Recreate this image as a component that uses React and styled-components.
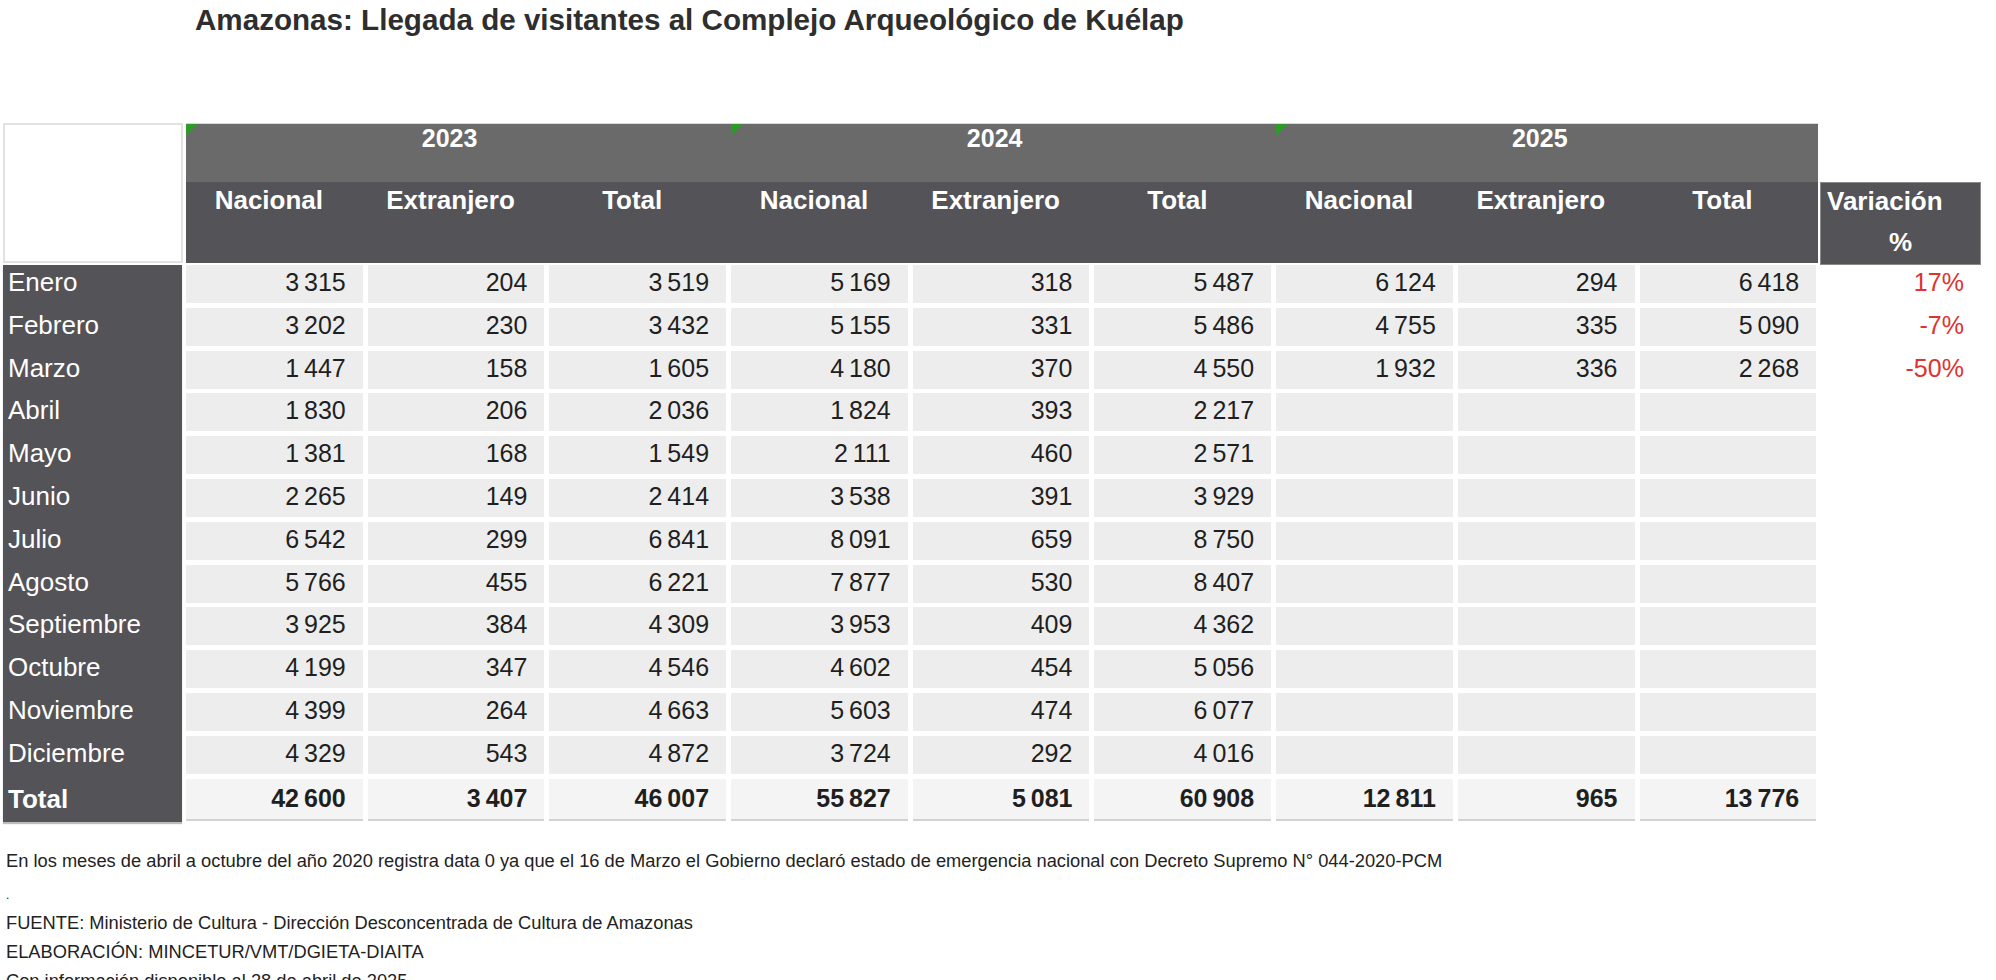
import React from "react"
import styled, { createGlobalStyle } from "styled-components"

const GlobalStyle = createGlobalStyle`
  html, body {
    margin: 0;
    padding: 0;
    background: #fff;
  }
  body {
    font-family: "Liberation Sans", Arial, sans-serif;
    color: #1f1f1f;
  }
`

const years = ["2023", "2024", "2025"]
const subs = ["Nacional", "Extranjero", "Total"]

const months = [
  "Enero", "Febrero", "Marzo", "Abril", "Mayo", "Junio", "Julio",
  "Agosto", "Septiembre", "Octubre", "Noviembre", "Diciembre",
]

const rows = [
  ["3 315", "204", "3 519", "5 169", "318", "5 487", "6 124", "294", "6 418"],
  ["3 202", "230", "3 432", "5 155", "331", "5 486", "4 755", "335", "5 090"],
  ["1 447", "158", "1 605", "4 180", "370", "4 550", "1 932", "336", "2 268"],
  ["1 830", "206", "2 036", "1 824", "393", "2 217", "", "", ""],
  ["1 381", "168", "1 549", "2 111", "460", "2 571", "", "", ""],
  ["2 265", "149", "2 414", "3 538", "391", "3 929", "", "", ""],
  ["6 542", "299", "6 841", "8 091", "659", "8 750", "", "", ""],
  ["5 766", "455", "6 221", "7 877", "530", "8 407", "", "", ""],
  ["3 925", "384", "4 309", "3 953", "409", "4 362", "", "", ""],
  ["4 199", "347", "4 546", "4 602", "454", "5 056", "", "", ""],
  ["4 399", "264", "4 663", "5 603", "474", "6 077", "", "", ""],
  ["4 329", "543", "4 872", "3 724", "292", "4 016", "", "", ""],
]

const totals = ["42 600", "3 407", "46 007", "55 827", "5 081", "60 908", "12 811", "965", "13 776"]

const variations = ["17%", "-7%", "-50%"]

export default function App() {
  return (
    <Page>
      <GlobalStyle />
      <Title>Amazonas: Llegada de visitantes al Complejo Arqueológico de Kuélap</Title>

      <Table>
        <HeadRow>
          <Corner />
          <YearBand>
            {years.map((year) => (
              <YearGroup key={year}>
                <YearCell>{year}</YearCell>
                <SubRow>
                  {subs.map((s) => (
                    <SubCell key={s}>{s}</SubCell>
                  ))}
                </SubRow>
              </YearGroup>
            ))}
          </YearBand>
          <VarHead>
            <span className="first">Variación</span>
            <span className="second">%</span>
          </VarHead>
        </HeadRow>

        <Body>
          <MonthCol>
            {months.map((m) => (
              <MonthLabel key={m}>{m}</MonthLabel>
            ))}
            <MonthLabel $total>Total</MonthLabel>
          </MonthCol>

          <DataGrid>
            {rows.map((row, i) =>
              row.map((v, j) => <Cell key={`${i}-${j}`}>{v}</Cell>)
            )}
            {totals.map((v, j) => (
              <Cell key={`t-${j}`} $total>
                {v}
              </Cell>
            ))}
          </DataGrid>

          <VarCol>
            {variations.map((v) => (
              <VarValue key={v}>{v}</VarValue>
            ))}
          </VarCol>
        </Body>
      </Table>

      <Notes>
        <NoteLine $gap>
          En los meses de abril a octubre del año 2020 registra data 0 ya que el 16 de Marzo el Gobierno declaró estado de emergencia nacional con Decreto Supremo N° 044-2020-PCM
        </NoteLine>
        <NoteLine $small>.</NoteLine>
        <NoteLine>FUENTE: Ministerio de Cultura - Dirección Desconcentrada de Cultura de Amazonas</NoteLine>
        <NoteLine>ELABORACIÓN: MINCETUR/VMT/DGIETA-DIAITA</NoteLine>
        <NoteLine>Con información disponible al 28 de abril de 2025</NoteLine>
      </Notes>
    </Page>
  )
}

const Page = styled.div`
  width: 1996px;
  height: 980px;
  overflow: hidden;
  background: #fff;
`

const Title = styled.h1`
  margin: 0;
  padding: 3px 0 0 195px;
  font-size: 29.6px;
  line-height: 34px;
  font-weight: bold;
  color: #2e2e2e;
`

const Table = styled.div`
  margin: 86px 0 0 3px;
  display: flex;
  flex-direction: column;
`

const HeadRow = styled.div`
  display: flex;
  align-items: flex-start;
`

const Corner = styled.div`
  width: 180px;
  height: 140px;
  box-sizing: border-box;
  border: 2px solid #e2e2e2;
  margin-right: 3px;
  background: #fff;
`

const YearBand = styled.div`
  display: flex;
  width: 1632px;
  overflow: hidden;
  border-top: 1px solid #d8d8d8;
`

const YearGroup = styled.div`
  flex: 0 0 545.1px;
  display: flex;
  flex-direction: column;
`

const YearCell = styled.div`
  position: relative;
  height: 58px;
  background: #6a6a6a;
  color: #fff;
  font-weight: bold;
  font-size: 25px;
  line-height: 28px;
  text-align: center;
  padding-right: 18px;
  &::before {
    content: "";
    position: absolute;
    left: 0;
    top: 0;
    width: 0;
    height: 0;
    border-top: 12px solid #2f9a2a;
    border-right: 12px solid transparent;
  }
`

const SubRow = styled.div`
  display: flex;
  height: 81px;
  background: #545357;
`

const SubCell = styled.div`
  flex: 0 0 181.7px;
  box-sizing: border-box;
  padding-right: 16px;
  text-align: center;
  color: #fff;
  font-weight: bold;
  font-size: 26px;
  line-height: 36px;
`

const VarHead = styled.div`
  width: 161px;
  height: 83px;
  margin: 59px 0 0 2px;
  box-sizing: border-box;
  border: 1px solid #8a8a8a;
  background: #545357;
  color: #fff;
  font-weight: bold;
  font-size: 26px;
  display: flex;
  flex-direction: column;
  .first {
    line-height: 36px;
    padding-left: 6px;
  }
  .second {
    line-height: 46px;
    text-align: center;
  }
`

const Body = styled.div`
  display: flex;
  align-items: flex-start;
`

const MonthCol = styled.div`
  width: 179px;
  margin-right: 4px;
  background: #545357;
  display: flex;
  flex-direction: column;
  box-shadow: 0 2px 1px #bdbdbd;
`

const MonthLabel = styled.div`
  height: ${(p) => (p.$total ? "43.4px" : "42.8px")};
  line-height: ${(p) => (p.$total ? "40px" : "35px")};
  padding-left: 5px;
  color: #fff;
  font-size: 26px;
  font-weight: ${(p) => (p.$total ? "bold" : "normal")};
`

const DataGrid = styled.div`
  display: grid;
  grid-template-columns: repeat(9, 176.7px);
  grid-template-rows: repeat(12, 38px) 42px;
  column-gap: 5px;
  row-gap: 4.8px;
`

const Cell = styled.div`
  box-sizing: border-box;
  background: ${(p) => (p.$total ? "#f4f4f4" : "#ededed")};
  border-bottom: ${(p) => (p.$total ? "2px solid #d2d2d2" : "none")};
  text-align: right;
  padding-right: 17px;
  font-size: 25px;
  line-height: ${(p) => (p.$total ? "38px" : "35px")};
  font-weight: ${(p) => (p.$total ? "bold" : "normal")};
  word-spacing: -2px;
  color: #1f1f1f;
`

const VarCol = styled.div`
  width: 161px;
  margin-left: 3.7px;
  display: flex;
  flex-direction: column;
`

const VarValue = styled.div`
  height: 42.8px;
  line-height: 35px;
  text-align: right;
  padding-right: 17px;
  font-size: 25px;
  color: #e0322f;
`

const Notes = styled.div`
  margin-top: 25px;
  padding-left: 6px;
  font-size: 18.3px;
  color: #222;
`

const NoteLine = styled.div`
  line-height: 28.7px;
  margin-bottom: ${(p) => (p.$gap ? "5px" : "0")};
  font-size: ${(p) => (p.$small ? "12px" : "18.3px")};
`
